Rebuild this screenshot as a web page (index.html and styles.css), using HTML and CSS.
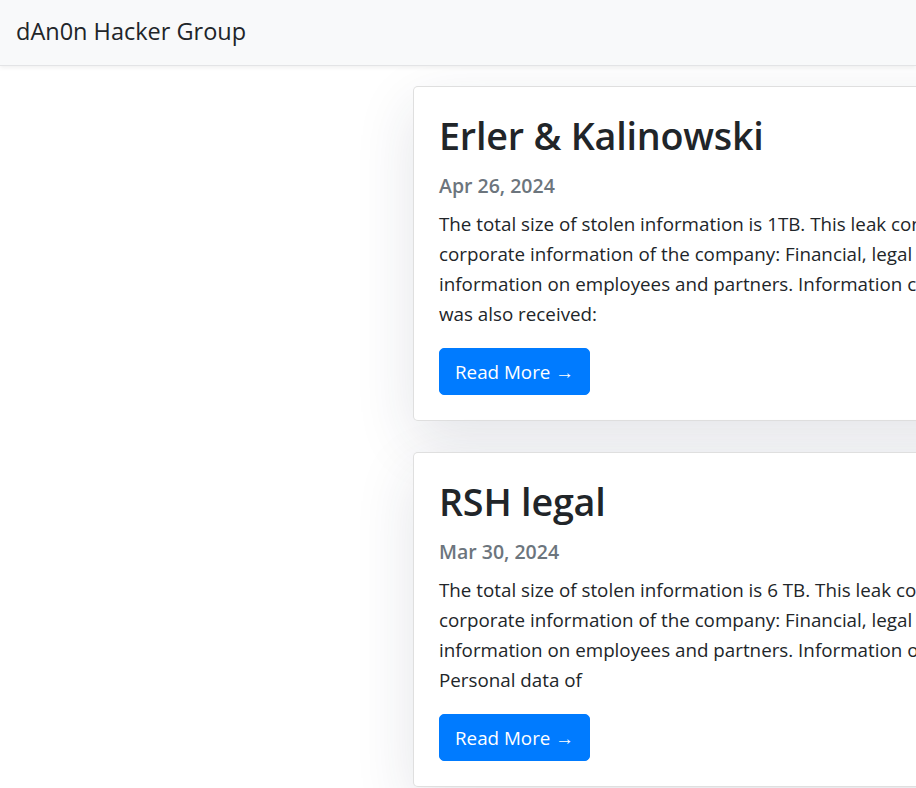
FILE: index.html
```html
<!DOCTYPE html>
<html lang="en">
<head>
<meta charset="utf-8">
<title>dAn0n Hacker Group</title>
<link rel="stylesheet" href="styles.css">
</head>
<body>
<nav class="navbar">
  <a class="brand" href="#">dAn0n Hacker Group</a>
</nav>
<main class="feed">
  <article class="card">
    <h2 class="card-title">Erler &amp; Kalinowski</h2>
    <h6 class="card-date">Apr 26, 2024</h6>
    <p class="card-text">The total size of stolen information is 1TB. This leak contains<br>corporate information of the company: Financial, legal documents,<br>information on employees and partners. Information concerning clients<br>was also received:</p>
    <a class="btn" href="#">Read More →</a>
  </article>
  <article class="card">
    <h2 class="card-title">RSH legal</h2>
    <h6 class="card-date">Mar 30, 2024</h6>
    <p class="card-text">The total size of stolen information is 6 TB. This leak contains<br>corporate information of the company: Financial, legal documents,<br>information on employees and partners. Information on clients.<br>Personal data of</p>
    <a class="btn" href="#">Read More →</a>
  </article>
</main>
</body>
</html>
```
FILE: styles.css
```css
html, body {
  margin: 0;
  padding: 0;
  overflow: hidden;
  background: #fff;
}
body {
  font-family: "Open Sans", "Noto Sans", sans-serif;
  color: #212529;
  width: 916px;
  height: 788px;
}
.navbar {
  height: 65px;
  background: #f8f9fa;
  border-bottom: 1px solid #e3e4e6;
  box-shadow: 0 2px 4px rgba(0,0,0,0.06);
  display: flex;
  align-items: center;
  padding: 0 16px;
  position: relative;
  z-index: 2;
}
.brand {
  font-size: 23.5px;
  color: #212529;
  text-decoration: none;
  line-height: 30px;
  margin-top: -3px;
}
.feed {
  padding: 20px 0 0 413px;
  display: flex;
  flex-direction: column;
  gap: 31px;
}
.card {
  width: 760px;
  flex: none;
  background: #fff;
  border: 1px solid rgba(0,0,0,0.125);
  border-radius: 5px;
  padding: 25px;
  box-shadow: 0 20px 60px rgba(30,45,70,0.12);
  display: flex;
  flex-direction: column;
  align-items: flex-start;
}
.card-title {
  margin: 0 0 14px;
  font-size: 37.7px;
  font-weight: 600;
  line-height: 48px;
  letter-spacing: -0.2px;
}
.card-date {
  margin: 0 0 11px;
  font-size: 19.5px;
  font-weight: 600;
  line-height: 24px;
  color: #6c757d;
}
.card-text {
  margin: 0 0 19px;
  font-size: 18.8px;
  line-height: 30px;
  white-space: nowrap;
}
.btn {
  display: inline-block;
  background: #007bff;
  color: #fff;
  text-decoration: none;
  font-size: 18.8px;
  line-height: 30px;
  padding: 7.5px 15px;
  border: 1px solid #007bff;
  border-radius: 5px;
}
```
